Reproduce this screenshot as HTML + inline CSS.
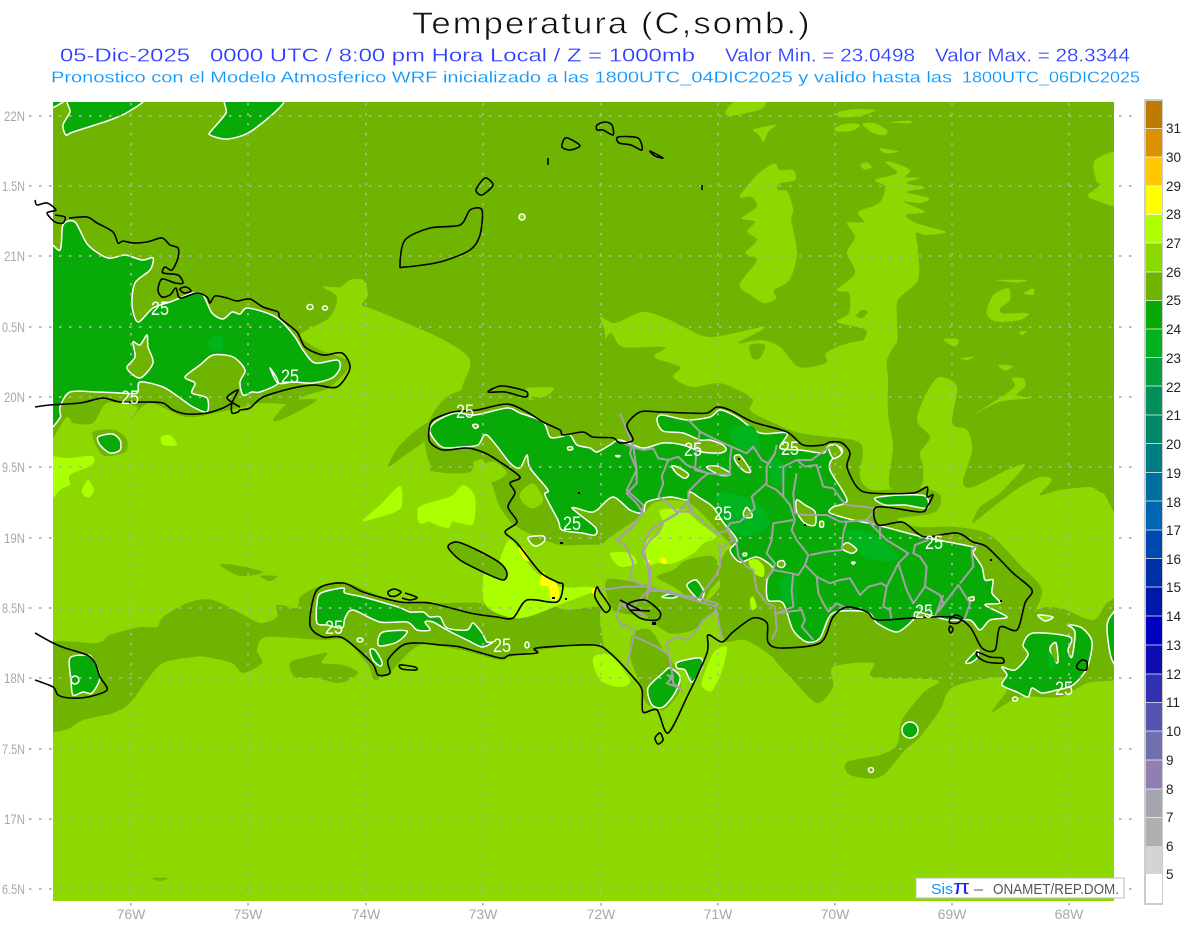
<!DOCTYPE html>
<html lang="es">
<head>
<meta charset="utf-8">
<title>Temperatura (C,somb.)</title>
<style>
html,body{margin:0;padding:0;background:#fff}
svg{display:block}
text{font-family:"Liberation Sans",sans-serif}
.o{fill:#6fb400}
.l{fill:#8cd800}
.b{fill:#aaff00}
.y{fill:#ffff00}
.g{fill:#08aa08}
.h{fill:#00b41e}
.gw{fill:#08aa08;stroke:#fff;stroke-width:1.5;stroke-linejoin:round}
.ow{fill:#6fb400;stroke:#fff;stroke-width:1.5;stroke-linejoin:round}
.lw{fill:#8cd800;stroke:#fff;stroke-width:1.5;stroke-linejoin:round}
.w{fill:none;stroke:#fff;stroke-width:1.5}
.k{fill:none;stroke:#000;stroke-width:1.6;stroke-linejoin:round}
.ax{font-size:14px;fill:#a8a8a8}
.lab{font-size:19px;fill:#fff}
.cb{font-size:13.5px;fill:#222}
</style>
</head>
<body>
<svg width="1200" height="927" viewBox="0 0 1200 927" xmlns="http://www.w3.org/2000/svg">
<rect width="1200" height="927" fill="#fff"/>

<!-- titles -->
<text transform="translate(412 33.5) scale(1.12 1)" x="0" y="0" font-size="31" fill="#111" stroke="#fff" stroke-width=".6" textLength="355" lengthAdjust="spacing">Temperatura (C,somb.)</text>
<g font-size="18" fill="#2a3cff" stroke="#fff" stroke-width=".2">
<text x="60" y="61.5" textLength="130" lengthAdjust="spacingAndGlyphs">05-Dic-2025</text>
<text x="210" y="61.5" textLength="485" lengthAdjust="spacingAndGlyphs">0000 UTC / 8:00 pm Hora Local / Z = 1000mb</text>
<text x="725" y="61.5" textLength="190" lengthAdjust="spacingAndGlyphs">Valor Min. = 23.0498</text>
<text x="935" y="61.5" textLength="195" lengthAdjust="spacingAndGlyphs">Valor Max. = 28.3344</text>
</g>
<g font-size="16" fill="#0a96ff" stroke="#fff" stroke-width=".15">
<text x="51" y="82.5" textLength="901" lengthAdjust="spacingAndGlyphs">Pronostico con el Modelo Atmosferico WRF inicializado a las 1800UTC_04DIC2025 y valido hasta las</text>
<text x="962" y="82.5" textLength="178" lengthAdjust="spacingAndGlyphs">1800UTC_06DIC2025</text>
</g>

<!-- map base -->
<clipPath id="m"><rect x="53" y="102" width="1061" height="799"/></clipPath>
<g clip-path="url(#m)">
<rect x="53" y="102" width="1061" height="799" class="l"/>

<!-- olive north -->
<polygon class="o" points="40,90 1125,90 1125,490 1103,493 1090,487 1060,490 1040,495 1052,480 1040,477 1020,487 993,507 973,523 980,507 1000,493 1025,465 1007,470 973,487 963,482 972,450 967,430 952,423 957,387 940,377 928,390 917,420 930,437 920,453 923,467 920,487 890,487 893,447 888,413 888,380 887,360 895,337 849,343 826,353 826,363 799,367 780,347 761,340 738,343 765,327 711,337 684,327 665,318 642,312 615,323 600,317 605,335 600,395 470,395 462,388 470,360 440,338 375,310 362,305 368,295 363,280 350,280 340,287 323,287 337,297 330,317 307,330 300,337 320,350 350,363 330,387 303,397 273,420 297,407 263,403 230,410 187,417 150,403 130,420 137,407 107,403 93,423 73,423 67,417 40,423"/>

<!-- light patches in north olive -->
<g transform="translate(600 90) scale(.3827 .3333)" class="l">
<polygon points="365,320 410,255 455,220 470,240 505,240 510,270 470,280 465,300 490,305 505,360 500,390 515,490 495,570 455,600 460,625 430,640 400,620 365,585 410,510 380,490 410,450 385,425 405,395 370,385 410,350 395,320"/>
<polygon points="330,60 360,30 430,30 425,55 380,70 335,78"/>
<polygon points="400,120 435,108 462,105 440,125 428,155 415,135"/>
<polygon points="620,68 660,58 720,60 680,78 630,82"/>
<polygon points="615,112 650,100 680,105 660,122 620,125"/>
<polygon points="685,102 720,100 750,120 745,135 715,130"/>
<polygon points="755,97 810,92 808,100"/>
<polygon points="732,175 780,185 745,190"/>
<polygon points="680,222 700,218 710,232 690,238"/>
</g>
<polygon class="l" points="885,162 895,163 910,170 906,177 920,178 906,183 925,188 906,192 929,198 921,203 904,202 925,212 906,215 916,223 946,232 925,235 916,233 918,250 918,280 898,300 897,323 895,345 864,345 866,330 837,322 849,313 849,293 837,290 855,273 847,253 855,237 847,223 864,222 858,212 879,203 885,187 875,180 897,173"/>
<polygon class="l" points="1125,153 1095,160 1096,180 1100,185 1088,195 1095,200 1125,205"/>
<g transform="translate(860 280) scale(.3333)" class="l">
<polygon points="380,100 400,45 445,25 450,60 420,85 430,100 505,100 480,120 410,125"/>
<polygon points="490,40 520,25 520,45"/>
<polygon points="250,178 295,178 285,200"/>
<polygon points="300,235 345,230 320,240"/>
<polygon points="415,255 460,258 435,272"/>
<polygon points="340,405 440,340 465,315 455,295 490,295 495,320 470,345 510,355 420,365"/>
<polygon points="478,155 500,155 485,165"/>
<polygon points="408,0 500,0 470,8"/>
</g>
<polygon class="o" points="862,310 868,312 862,318 856,316"/>
<polygon class="o" points="750,345 765,345 760,358 752,358"/>

<!-- Cuba south blobs -->
<polygon class="o" points="93,432 115,430 127,440 125,452 105,456 97,447"/>
<polygon class="o" points="273,420 290,402 317,400 285,418"/>
<polygon class="o" points="388,467 400,445 427,423 425,440 405,455"/>
<polygon class="o" points="430,470 445,450 470,450 470,472"/>

<!-- Jamaica & south olive belt -->
<polygon class="o" points="40,647 97,643 110,635 140,627 157,627 163,617 190,602 213,600 240,613 260,623 277,617 277,605 297,608 300,597 317,587 343,582 383,597 417,603 483,603 510,612 543,603 567,610 600,607 640,620 650,650 625,655 590,645 540,650 510,657 500,660 460,650 420,645 390,672 375,680 368,665 345,640 323,640 267,637 257,650 262,663 243,673 232,663 207,657 193,657 163,663 147,680 130,703 113,713 83,720 65,730 40,725"/>
<polygon class="o" points="290,663 307,657 327,653 322,663 343,665 358,673 340,683 317,678 295,677"/>
<polygon class="o" points="220,565 235,565 263,572 240,576"/>
<polygon class="o" points="260,576 277,576 270,581"/>
<polygon class="o" points="152,878 168,878 160,881"/>

<!-- Hispaniola belt -->
<polygon class="o" points="450,395 510,380 530,400 552,385 600,345 611,333 623,347 665,347 654,357 680,367 673,377 692,387 719,383 742,392 753,400 750,410 767,420 800,433 853,440 863,450 860,477 873,490 917,487 940,495 935,512 900,518 900,522 920,527 957,527 990,535 1020,565 1042,590 1030,620 1020,635 1037,610 1060,608 1093,620 1107,603 1125,600 1125,673 1087,683 1060,697 1020,697 992,712 1007,690 1000,677 953,687 940,710 920,737 905,750 880,777 850,775 847,762 880,755 897,745 902,720 923,693 937,680 873,677 873,663 833,667 833,687 817,703 793,680 777,663 770,655 745,640 720,640 700,600 650,560 600,545 560,545 517,527 500,507 493,487 483,460 460,467 433,467 425,445 427,425"/>

<!-- Haiti interior -->
<g transform="translate(420 390) scale(.3333)">
<polygon class="l" points="320,-6 400,-6 375,20 330,18"/>
<polygon class="l" points="195,225 225,215 260,250 215,275"/>
<polygon class="l" points="300,310 340,280 370,330 340,355 310,340"/>
<polygon class="l" points="290,470 350,480 410,470 470,465 530,470 600,470 570,500 620,520 630,570 540,590 430,595 340,545"/>
<polygon class="o" points="600,450 660,470 640,560 610,590 560,560 580,510"/>
<polygon class="b" points="0,350 90,320 130,285 165,320 160,400 120,400 60,385 0,400"/>
<polygon class="b" points="190,560 230,530 270,450 340,540 420,590 500,590 530,600 430,640 300,685 200,650"/>
<polygon class="l" points="500,480 530,490 520,515 495,510"/>
<polygon class="y" points="295,475 310,475 330,510 315,510"/>
<polygon class="y" points="368,545 385,565 410,580 418,610 410,633 392,625 385,590 360,585"/>
<polygon class="y" points="515,597 525,595 525,610 517,610"/>
<!-- Gonave interior -->
<polygon class="o" points="85,470 110,455 170,480 240,520 260,550 250,570 190,545 120,510"/>
</g>
<polygon class="b" points="40,460 70,458 92,456 92,465 70,475 70,485 60,490 40,510"/>
<polygon class="b" points="161,437 170,435 177,445 163,445"/>
<polygon class="b" points="82,490 88,480 94,490 90,497 84,496"/>
<polygon class="b" points="363,520 380,505 400,486 402,505 395,512 370,520"/>
<polygon class="b" points="417,510 430,503 450,500 450,527 430,522"/>

<!-- DR interior -->
<g transform="translate(620 390) scale(.3333)">
<polygon class="l" points="-60,470 60,380 110,335 210,340 300,430 335,470 330,510 290,530 300,590 260,640 300,660 310,750 260,740 265,800 200,920 145,1020 110,960 60,900 -30,830 -60,680 -40,620 -60,560"/>
<polygon class="o" points="200,510 280,500 300,560 270,600 240,640 160,590 110,560 160,540"/>
<polygon class="o" points="-40,570 60,580 130,600 170,610 240,630 290,650 250,690 220,720 150,730 70,680 -20,660"/>
<polygon class="o" points="40,730 90,720 130,780 170,840 180,900 130,960 80,940 60,880 30,800"/>
<polygon class="o" points="300,520 335,470 370,520 410,505 450,540 440,620 450,690 470,770 445,770 440,700 400,685 340,720 310,755 290,660 260,640 300,590"/>
<polygon class="b" points="70,490 80,450 110,430 130,400 120,360 190,360 240,400 290,440 250,460 220,490 160,520 110,520 80,530"/>
<polygon class="b" points="-30,490 30,490 50,520 0,530"/>
<polygon class="b" points="390,630 400,620 410,650 395,660"/>
<polygon class="b" points="385,515 410,508 432,530 430,560 405,552"/>
<polygon class="b" points="280,790 320,770 310,830 290,880 270,905 245,880"/>
<polygon class="y" points="120,505 135,505 140,520 125,520"/>
<polygon class="y" points="82,510 90,510 90,520 82,520"/>
</g>
<polygon class="b" points="593,658 610,655 630,680 620,687 600,680"/>

<!-- top-left greens -->
<polygon class="gw" points="45,110 65,100 45,95"/>
<polygon class="gw" points="72,98 70,112 63,125 66,135 73,132 110,120 128,112 142,98"/>
<polygon class="gw" points="228,98 226,113 212,130 210,135 228,139 253,130 285,98"/>

<!-- Cuba green -->
<polygon class="gw" points="45,254 60,250 63,225 75,222 88,245 108,258 125,255 142,260 153,258 150,270 135,283 132,305 138,322 153,308 170,302 180,298 193,293 203,295 212,313 223,319 232,312 240,314 247,308 267,313 280,320 295,337 303,350 315,363 337,360 340,368 332,378 313,383 293,382 278,383 270,368 278,383 260,392 252,392 243,395 240,382 245,370 233,357 213,355 200,365 185,377 195,383 192,393 207,398 207,412 193,407 180,398 163,387 140,382 137,393 120,393 97,392 70,392 60,407 60,418 45,418"/>
<polygon class="ow" points="147,335 148,347 153,363 140,378 127,368 135,357 133,342 140,345"/>
<polygon class="h" points="208,340 222,335 222,350 212,350"/>
<ellipse cx="310" cy="307" rx="3" ry="2.5" class="ow"/>
<ellipse cx="325" cy="308" rx="2.5" ry="2" class="ow"/>
<polygon class="gw" points="98,437 112,434 120,440 120,450 110,453 100,445"/>

<!-- Jamaica green -->
<polygon class="gw" points="70,658 87,655 92,658 100,677 92,693 83,692 73,695 71,680"/>
<circle cx="75" cy="680" r="4" class="w"/>

<!-- Hispaniola north green -->
<polygon class="gw" points="430,432 435,422 455,413 475,415 507,408 520,413 543,422 550,437 560,437 570,435 577,445 590,448 597,452 610,445 620,440 643,448 663,443 683,445 702,452 720,453 726,450 723,445 710,440 700,440 683,433 663,431 657,420 662,415 687,420 710,417 720,410 737,417 760,433 787,433 780,448 800,450 823,453 828,447 840,447 842,453 833,458 830,470 847,500 833,507 830,513 853,520 877,525 907,533 927,538 973,547 973,553 982,567 985,580 993,580 992,593 1000,603 985,605 1007,617 990,620 980,630 970,620 948,620 917,612 913,620 897,632 877,623 867,612 833,613 820,638 807,642 793,630 783,603 768,600 767,580 773,568 757,557 740,562 730,550 737,540 723,522 713,507 700,498 690,492 687,500 670,497 647,502 643,513 630,510 613,497 597,510 590,512 572,508 595,527 595,535 582,533 562,530 558,520 545,495 548,490 530,468 527,455 520,468 510,463 487,435 478,445 462,447 442,447"/>
<!-- brighter patches -->
<g transform="translate(620 390) scale(.3333)" class="h">
<polygon points="680,420 760,430 830,490 830,510 760,510 690,470"/>
<polygon points="290,310 400,330 450,400 380,440 320,400"/>
<polygon points="330,120 400,110 420,180 350,170"/>
<polygon points="480,570 520,560 530,640 490,630"/>
<polygon points="450,200 500,230 480,290 450,270"/>
</g>
<!-- olive pockets -->
<g transform="translate(620 390) scale(.3333)" class="ow" style="stroke-width:4.5">
<polygon points="343,200 358,195 375,215 392,245 375,245 350,220"/>
<polygon points="155,228 175,232 205,252 195,265 170,250"/>
<polygon points="260,232 290,228 325,245 330,255 300,255"/>
<polygon points="530,330 555,345 585,365 585,405 555,400 530,365"/>
<polygon points="665,475 682,458 710,478 695,490"/>
<polygon points="600,395 610,395 610,410 600,410"/>
<polygon points="475,515 490,512 495,525 485,533 473,527"/>
<polygon points="370,370 380,352 395,370 395,382 375,382"/>
<polygon points="370,490 380,490 378,497 370,497"/>
<polygon points="695,517 705,517 700,523"/>
<polygon points="1045,625 1060,620 1062,630 1050,632"/>
<polygon points="625,170 650,165 665,190 640,205"/>
</g>
<g transform="translate(420 390) scale(.3333)" class="ow" style="stroke-width:4.5">
<polygon points="158,105 170,103 175,110 165,115"/>
<polygon points="443,172 455,170 458,178 445,180"/>
<polygon points="325,442 370,438 372,455 350,468 335,462"/>
<polygon points="587,197 600,197 595,201"/>
</g>
<!-- Samana green -->
<polygon class="gw" points="875,498 900,495 925,496 927,508 905,505 885,505"/>

<!-- Haiti south green -->
<polygon class="gw" points="321,593 343,588 345,593 363,597 398,607 410,612 423,612 430,617 440,617 447,628 467,630 473,623 482,633 487,642 493,642 482,647 467,640 447,630 433,622 425,622 430,630 417,630 407,622 380,622 353,610 345,618 342,628 327,625 317,623 317,603"/>
<polygon class="gw" points="378,640 383,632 407,631 397,642 380,646"/>
<polygon class="gw" points="370,650 375,650 382,662 380,666 373,660"/>
<ellipse cx="360" cy="640" rx="3" ry="2" class="ow"/>
<ellipse cx="527" cy="645" rx="2" ry="3" class="ow"/>

<!-- south DR greens -->
<polygon class="gw" points="648,688 663,673 670,668 680,677 675,693 663,707 652,705"/>
<polygon class="gw" points="678,662 700,658 702,667 692,682 685,670 677,668"/>
<polygon class="gw" points="687,585 696,580 704,592 700,600 692,593"/>
<polygon class="gw" points="662,597 670,594 678,596 672,598"/>

<!-- Mona, east -->
<circle cx="910" cy="730" r="8" class="gw"/>
<circle cx="871" cy="770" r="2.5" class="ow"/>
<polygon class="gw" points="1002,667 1015,670 1028,655 1023,645 1033,633 1070,637 1068,650 1072,657 1075,632 1068,625 1082,628 1092,642 1087,668 1073,685 1057,690 1042,693 1032,688 1028,697 1017,692 1002,685 1007,675"/>
<polygon class="ow" points="1050,648 1056,643 1058,662 1053,660"/>
<polygon class="gw" points="1107,627 1113,613 1125,605 1125,668 1112,660"/>
<polygon class="lw" points="1038,615 1053,617 1045,621"/>
<ellipse cx="1015" cy="699" rx="2.5" ry="2" class="ow"/>
<polygon class="h" points="1048,650 1056,664 1050,668"/>
<polygon class="gw" points="966,662 978,650 977,658 970,663"/>
<circle cx="522" cy="217" r="3" class="lw"/>
</g>

<!-- grid -->
<g stroke="#b0b0b0" stroke-width="1.7" stroke-dasharray="2.5 7.5" fill="none">
<path d="M29 116H1133M29 186H1133M29 256H1133M29 327H1133M29 397H1133M29 467H1133M29 538H1133M29 608H1133M29 678H1133M29 749H1133M29 819H1133M29 889H1133"/>
<path d="M131 103V906M248 103V906M366 103V906M483 103V906M601 103V906M718 103V906M835 103V906M952 103V906M1069 103V906"/>
</g>

<!-- gray borders -->
<g fill="none" stroke="#a3a3a3" stroke-width="6" stroke-linejoin="round" transform="translate(620 390) scale(.3333)">
<path d="M0 155 35 170 30 190 50 240 50 280 20 310 50 340 70 370 0 445"/>
<path d="M35 170 70 180 100 175 115 205 145 210 175 200 200 225 265 250M145 210 125 260 130 280 115 320 140 335 170 365 210 365 250 395 290 430 330 420"/>
<path d="M205 90 240 125 290 150 335 170 380 190 400 170 425 210 445 220 465 190 470 165M240 125 230 170 225 240 265 250 245 265 205 305 205 340 220 365"/>
<path d="M265 250 330 255 330 210 335 170"/>
<path d="M465 190 440 230 440 280 395 320 405 355 360 395 330 400 320 420 350 460 355 500 380 530 400 540 410 600 440 640 465 650 470 720 455 750"/>
<path d="M440 285 470 300 490 320 510 345 525 390 515 420 530 450 565 495 555 525 535 555 515 550 460 540 435 570"/>
<path d="M490 320 490 230 530 210 555 230 590 225 610 290 640 295 665 330 680 345 730 350 770 355 740 390 780 410 780 440"/>
<path d="M530 210 575 210 630 170M530 250 520 310 525 370"/>
<path d="M525 370 550 375 620 375 660 395 680 395 740 390 800 450 865 490 835 520 800 590 790 650 810 660 815 690"/>
<path d="M680 395 670 430 665 480 620 485 570 495"/>
<path d="M520 390 460 400 455 450 440 490 465 520 460 540"/>
<path d="M555 525 590 560 630 580 660 570 690 565 720 615 745 590 785 580 800 590"/>
<path d="M590 560 595 610 610 640 625 665 650 640 680 655"/>
<path d="M520 550 515 600 520 650 470 670 545 660 555 690 545 710 580 750"/>
<path d="M835 520 860 600 880 640 915 590 920 530 900 500 880 490 885 465 925 450"/>
<path d="M915 590 960 615 970 640 955 665 1015 585 1050 640 1030 700M1020 580 1060 530 1055 480 1075 460"/>
<path d="M970 615 945 680"/>
<path d="M0 640 30 660 80 605 140 600 180 615 240 625 290 640 285 665 250 690 230 720 200 750 170 740 140 760 155 840 160 880 190 905"/>
<path d="M130 400 115 430 90 450 65 490 90 530 90 590 75 640"/>
<path d="M130 395 175 370M300 465 300 530 285 560 240 620M340 450 295 480"/>
<path d="M0 700 45 720 20 830M45 740 110 770 140 790M290 660 300 720 310 750"/>
<path d="M140 855 160 860 140 880 170 890"/>
</g>
<g fill="none" stroke="#a3a3a3" stroke-width="6" stroke-linejoin="round" transform="translate(420 390) scale(.3333)">
<path d="M600 70 620 120 640 170 650 240 620 300 670 345 665 370 640 410 590 450 620 470 640 520 630 570 680 590"/>
<path d="M540 600 620 590 680 590 750 610 890 650"/>
<path d="M670 470 690 420 770 370 800 340 820 370M670 470 690 570 680 620"/>
<path d="M610 640 680 680 600 640 590 680 610 710"/>
</g>

<!-- coasts -->
<g>
<path class="k" d="M35 200 37 205 47 203 56 210 47 213 55 222 63 223 65 217 55 215"/>
<path class="k" d="M69 218 87 217 97 223 113 232 118 243 123 241 133 243 147 242 162 238 170 245 178 248 178 258 172 270 165 267 163 273 178 275 183 283 175 283 162 279 158 290 162 297 170 295 176 288 180 298 197 293 207 297 210 303 215 296 227 298 237 301 250 299 263 307 278 312 280 318 297 332 305 347 323 355 342 353 350 368 337 387 315 385 293 388 263 397 250 408 240 410 238 412 232 413 232 403 238 390 227 398 240 407M232 403 223 408 207 413 187 414 173 410 163 403 147 402 120 402 103 398 80 403 50 405 35 407"/>
<path class="k" d="M180 289 186 287 191 291 184 293Z"/>
<path class="k" d="M35 633 53 643 65 648 87 655 95 663 100 677 107 690 88 697 70 698 58 695 53 687 35 680"/>
<path class="k" d="M433 420 453 412 477 410 507 404 527 412 543 422 560 430 563 435 583 432 593 437 613 438 620 443 633 440 627 425 640 412 660 412 687 413 707 413 717 407 730 410 753 422 787 432 803 445 823 445 830 442 842 443 850 453 847 467 857 487 870 493 913 493 927 487 927 497 933 495 927 507 920 512 877 507 878 525 902 522 917 533 927 537 957 533 973 542 987 547 1013 573 1032 590 1025 603 1017 630 1000 627 995 650 982 648 970 627 953 617 913 618 877 620 867 612 847 607 833 617 820 643 780 648 768 642 767 623 753 618 733 632 722 642 708 635 707 653 687 697 668 733 657 710 643 712 642 690 633 677 610 653 593 645 537 648 537 653 510 655 500 658 460 647 440 645 420 643 403 645 388 660 390 673 378 675 372 663 343 638 323 637 310 625 317 590 343 583 363 592 400 602 430 603 470 613 497 617 513 618 527 600 557 602 563 585 557 582 540 572 517 543 505 532 517 522 508 507 515 493 510 483 520 477 500 462 485 453 467 448 443 450 430 442 429 430Z"/>
<path class="k" d="M448 547 457 542 477 550 500 563 507 573 503 580 483 572 460 560Z"/>
<path class="k" d="M597 587 595 597 605 612 610 607 600 592Z"/>
<path class="k" d="M627 605 645 600 660 612 657 620 640 618Z"/>
<path class="k" d="M620 600 640 610M630 610 650 611" />
<path class="k" d="M488 392 500 386 515 388 527 392 525 397 505 392Z"/>
<path class="k" d="M400 665 415 667 416 670 402 669Z"/>
<path class="k" d="M388 592 394 589 401 592 396 596 390 596Z"/>
<path class="k" d="M405 593 414 596 417 598 410 600 402 598"/>
<path class="k" d="M400 265 405 240 430 228 460 225 470 210 482 210 480 235 470 250 440 262 405 267Z"/>
<path class="k" d="M476 190 485 178 493 185 482 195Z"/>
<path class="k" d="M597 125 605 122 612 125 613 135 603 130 597 130Z"/>
<path class="k" d="M618 137 638 138 642 150 631 145 619 143Z"/>
<path class="k" d="M650 151 663 158 655 156Z"/>
<path class="k" d="M562 147 565 138 572 140 580 146 570 150Z"/>
<path class="k" d="M548 158V165M702 185V190"/>
<path class="k" d="M977 652 990 657 1002 658 1003 663 987 662 978 657Z"/>
<path class="k" d="M1077 665 1082 660 1087 662 1086 670 1078 669Z"/>
<path class="k" d="M950 619 956 615 962 618 958 623 950 623Z"/>
<path class="k" d="M950 626 953 629 951 633 949 630Z"/>
<path class="k" d="M655 738 660 733 663 740 658 744Z"/>
</g>
<g fill="#000">
<rect x="652" y="622" width="4" height="3"/><rect x="578" y="492" width="2" height="2"/><rect x="1000" y="600" width="2" height="2"/>
<rect x="990" y="559" width="2" height="2"/><rect x="738" y="458" width="2" height="2"/><rect x="804" y="524" width="2" height="2"/>
<rect x="552" y="597" width="3" height="2"/><rect x="565" y="598" width="2" height="2"/><rect x="560" y="542" width="3" height="2"/>
</g>

<!-- 25 labels -->
<g class="lab" text-anchor="start">
<text x="151" y="315" textLength="18" lengthAdjust="spacingAndGlyphs">25</text>
<text x="281" y="383" textLength="18" lengthAdjust="spacingAndGlyphs">25</text>
<text x="121" y="404" textLength="18" lengthAdjust="spacingAndGlyphs">25</text>
<text x="456" y="418" textLength="18" lengthAdjust="spacingAndGlyphs">25</text>
<text x="684" y="456" textLength="18" lengthAdjust="spacingAndGlyphs">25</text>
<text x="781" y="455" textLength="18" lengthAdjust="spacingAndGlyphs">25</text>
<text x="714" y="520" textLength="18" lengthAdjust="spacingAndGlyphs">25</text>
<text x="563" y="530" textLength="18" lengthAdjust="spacingAndGlyphs">25</text>
<text x="925" y="549" textLength="18" lengthAdjust="spacingAndGlyphs">25</text>
<text x="915" y="618" textLength="18" lengthAdjust="spacingAndGlyphs">25</text>
<text x="325" y="634" textLength="18" lengthAdjust="spacingAndGlyphs">25</text>
<text x="493" y="652" textLength="18" lengthAdjust="spacingAndGlyphs">25</text>
<text x="1055" y="695" textLength="18" lengthAdjust="spacingAndGlyphs">25</text>
</g>

<!-- axis labels -->
<g class="ax">
<text x="4" y="121" textLength="21" lengthAdjust="spacingAndGlyphs">22N</text>
<text x="2" y="191" textLength="23" lengthAdjust="spacingAndGlyphs">1.5N</text>
<text x="4" y="261" textLength="21" lengthAdjust="spacingAndGlyphs">21N</text>
<text x="2" y="332" textLength="23" lengthAdjust="spacingAndGlyphs">0.5N</text>
<text x="4" y="402" textLength="21" lengthAdjust="spacingAndGlyphs">20N</text>
<text x="2" y="472" textLength="23" lengthAdjust="spacingAndGlyphs">9.5N</text>
<text x="4" y="543" textLength="21" lengthAdjust="spacingAndGlyphs">19N</text>
<text x="2" y="613" textLength="23" lengthAdjust="spacingAndGlyphs">8.5N</text>
<text x="4" y="683" textLength="21" lengthAdjust="spacingAndGlyphs">18N</text>
<text x="2" y="754" textLength="23" lengthAdjust="spacingAndGlyphs">7.5N</text>
<text x="4" y="824" textLength="21" lengthAdjust="spacingAndGlyphs">17N</text>
<text x="2" y="894" textLength="23" lengthAdjust="spacingAndGlyphs">6.5N</text>
</g>
<g class="ax" text-anchor="middle">
<text x="131" y="919">76W</text>
<text x="248" y="919">75W</text>
<text x="366" y="919">74W</text>
<text x="483" y="919">73W</text>
<text x="601" y="919">72W</text>
<text x="718" y="919">71W</text>
<text x="835" y="919">70W</text>
<text x="952" y="919">69W</text>
<text x="1069" y="919">68W</text>
</g>

<!-- logo box -->
<rect x="916" y="878" width="208" height="20" fill="#fff" stroke="#bbb" stroke-width="1"/>
<text x="931" y="894" font-size="15" fill="#0a96ff" textLength="22" lengthAdjust="spacingAndGlyphs">Sis</text>
<text x="953" y="894" font-size="20" fill="#2222ff" textLength="17" lengthAdjust="spacingAndGlyphs">π</text>
<text x="974" y="894" font-size="15" fill="#555" textLength="9" lengthAdjust="spacingAndGlyphs">–</text>
<text x="993" y="894" font-size="15" fill="#555" textLength="126" lengthAdjust="spacingAndGlyphs">ONAMET/REP.DOM.</text>

<!-- colour bar -->
<rect x="1145" y="100" width="17" height="804" fill="#fff" stroke="#ccc" stroke-width="2"/>
<g>
<rect x="1146" y="101" width="16" height="27.5" fill="#bd7c00"/>
<rect x="1146" y="128.5" width="16" height="28.5" fill="#dc9200"/>
<rect x="1146" y="157" width="16" height="29" fill="#ffc800"/>
<rect x="1146" y="186" width="16" height="28.5" fill="#ffff00"/>
<rect x="1146" y="214.5" width="16" height="28.5" fill="#aeff00"/>
<rect x="1146" y="243" width="16" height="29" fill="#8cd900"/>
<rect x="1146" y="272" width="16" height="28.5" fill="#6fb400"/>
<rect x="1146" y="300.5" width="16" height="28.5" fill="#06a906"/>
<rect x="1146" y="329" width="16" height="28.5" fill="#00b31e"/>
<rect x="1146" y="357.5" width="16" height="28.5" fill="#00a03c"/>
<rect x="1146" y="386" width="16" height="29" fill="#00915a"/>
<rect x="1146" y="415" width="16" height="28.5" fill="#008866"/>
<rect x="1146" y="443.5" width="16" height="29" fill="#007d80"/>
<rect x="1146" y="472.5" width="16" height="28.5" fill="#006fa0"/>
<rect x="1146" y="501" width="16" height="29" fill="#0066b4"/>
<rect x="1146" y="530" width="16" height="28.5" fill="#0047b0"/>
<rect x="1146" y="558.5" width="16" height="28.5" fill="#0030a8"/>
<rect x="1146" y="587" width="16" height="29" fill="#0018a8"/>
<rect x="1146" y="616" width="16" height="29" fill="#0000c0"/>
<rect x="1146" y="645" width="16" height="29" fill="#0d0db0"/>
<rect x="1146" y="674" width="16" height="28.5" fill="#3030b0"/>
<rect x="1146" y="702.5" width="16" height="28.5" fill="#5555b0"/>
<rect x="1146" y="731" width="16" height="29" fill="#7070b0"/>
<rect x="1146" y="760" width="16" height="29" fill="#9080b0"/>
<rect x="1146" y="789" width="16" height="28.5" fill="#a6a6b0"/>
<rect x="1146" y="817.5" width="16" height="28.5" fill="#b0b0b0"/>
<rect x="1146" y="846" width="16" height="28" fill="#d4d4d4"/>
<rect x="1146" y="874" width="16" height="29" fill="#fff"/>
</g>
<path stroke="#fff" stroke-opacity=".7" stroke-width="1" d="M1146 128.5h16M1146 157h16M1146 186h16M1146 214.5h16M1146 243h16M1146 272h16M1146 300.5h16M1146 329h16M1146 357.5h16M1146 386h16M1146 415h16M1146 443.5h16M1146 472.5h16M1146 501h16M1146 530h16M1146 558.5h16M1146 587h16M1146 616h16M1146 645h16M1146 674h16M1146 702.5h16M1146 731h16M1146 760h16M1146 789h16M1146 817.5h16"/>
<g class="cb">
<text x="1166" y="133">31</text>
<text x="1166" y="162">30</text>
<text x="1166" y="191">29</text>
<text x="1166" y="219">28</text>
<text x="1166" y="248">27</text>
<text x="1166" y="277">26</text>
<text x="1166" y="305">25</text>
<text x="1166" y="334">24</text>
<text x="1166" y="363">23</text>
<text x="1166" y="392">22</text>
<text x="1166" y="420">21</text>
<text x="1166" y="449">20</text>
<text x="1166" y="478">19</text>
<text x="1166" y="507">18</text>
<text x="1166" y="535">17</text>
<text x="1166" y="564">16</text>
<text x="1166" y="592">15</text>
<text x="1166" y="621">14</text>
<text x="1166" y="650">13</text>
<text x="1166" y="679">12</text>
<text x="1166" y="707">11</text>
<text x="1166" y="736">10</text>
<text x="1166" y="765">9</text>
<text x="1166" y="794">8</text>
<text x="1166" y="822">7</text>
<text x="1166" y="851">6</text>
<text x="1166" y="879">5</text>
</g>
</svg>
<script>
(function(){
var NS="http://www.w3.org/2000/svg",T=1/7;
function seg(a,closed){
  var n=a.length,d="M"+a[0][0]+" "+a[0][1],i,m=closed?n:n-1;
  for(i=0;i<m;i++){
    var p0=closed?a[(i-1+n)%n]:a[Math.max(i-1,0)],
        p1=a[i],
        p2=a[(i+1)%n],
        p3=closed?a[(i+2)%n]:a[Math.min(i+2,n-1)];
    d+="C"+(p1[0]+(p2[0]-p0[0])*T).toFixed(1)+" "+(p1[1]+(p2[1]-p0[1])*T).toFixed(1)+" "+
       (p2[0]-(p3[0]-p1[0])*T).toFixed(1)+" "+(p2[1]-(p3[1]-p1[1])*T).toFixed(1)+" "+p2[0]+" "+p2[1];
  }
  return d+(closed?"Z":"");
}
Array.prototype.slice.call(document.querySelectorAll("polygon")).forEach(function(p){
  var a=p.getAttribute("points").trim().split(/\s+/).map(function(s){return s.split(",").map(Number)});
  if(a.length<3)return;
  var e=document.createElementNS(NS,"path");
  e.setAttribute("d",seg(a,true));
  if(p.getAttribute("class"))e.setAttribute("class",p.getAttribute("class"));
  p.parentNode.replaceChild(e,p);
});
Array.prototype.slice.call(document.querySelectorAll("path.k")).forEach(function(p){
  var d=p.getAttribute("d");
  if(/[VH]/.test(d))return;
  var out=d.split("M").filter(Boolean).map(function(s){
    var closed=/Z/.test(s),n=s.replace("Z","").trim().split(/\s+/).map(Number),a=[];
    for(var i=0;i<n.length;i+=2)a.push([n[i],n[i+1]]);
    return a.length>2?seg(a,closed):"M"+a.map(function(q){return q.join(" ")}).join("L");
  }).join("");
  p.setAttribute("d",out);
});
})();
</script>
</body>
</html>
